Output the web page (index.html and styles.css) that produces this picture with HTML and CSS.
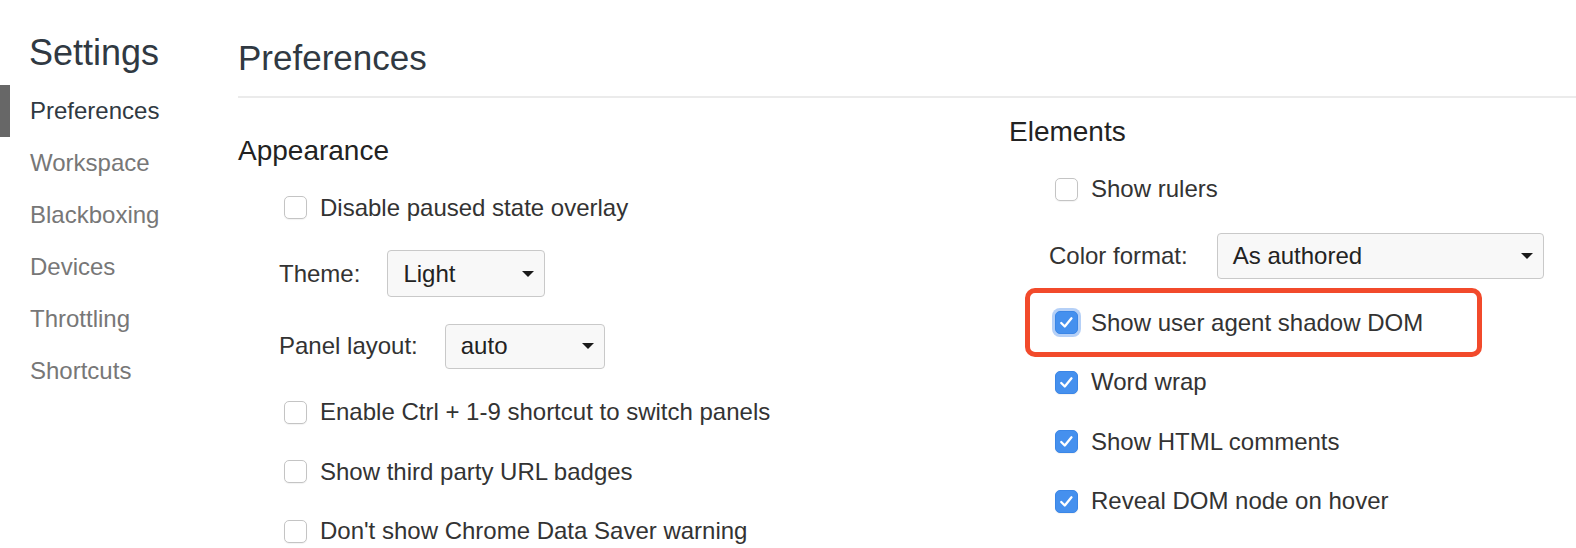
FILE: index.html
```html
<!DOCTYPE html>
<html>
<head>
<meta charset="utf-8">
<link rel="stylesheet" href="styles.css">
</head>
<body>
<div class="app">
  <aside class="sidebar">
    <div class="sidebar-title">Settings</div>
    <ul class="tabs">
      <li class="tab selected">Preferences</li>
      <li class="tab">Workspace</li>
      <li class="tab">Blackboxing</li>
      <li class="tab">Devices</li>
      <li class="tab">Throttling</li>
      <li class="tab">Shortcuts</li>
    </ul>
  </aside>
  <main class="content">
    <header class="content-header">Preferences</header>
    <div class="columns">
      <section class="col col-left">
        <h2 class="section-title">Appearance</h2>
        <div class="row row-check"><span class="box"></span><span class="label">Disable paused state overlay</span></div>
        <div class="row row-select"><span class="field-label">Theme:</span><span class="select sel-theme"><span>Light</span><span class="arrow"></span></span></div>
        <div class="row row-select"><span class="field-label">Panel layout:</span><span class="select sel-panel"><span>auto</span><span class="arrow"></span></span></div>
        <div class="row row-check"><span class="box"></span><span class="label">Enable Ctrl + 1-9 shortcut to switch panels</span></div>
        <div class="row row-check"><span class="box"></span><span class="label">Show third party URL badges</span></div>
        <div class="row row-check"><span class="box"></span><span class="label">Don't show Chrome Data Saver warning</span></div>
      </section>
      <section class="col col-right">
        <h2 class="section-title">Elements</h2>
        <div class="row row-check"><span class="box"></span><span class="label">Show rulers</span></div>
        <div class="row row-select tall"><span class="field-label">Color format:</span><span class="select sel-color"><span>As authored</span><span class="arrow"></span></span></div>
        <div class="row row-check highlighted"><span class="box checked focused"><svg viewBox="0 0 24 24" width="23" height="23"><path d="M6.5 12.5 L10.2 16.2 L17.2 7.6" fill="none" stroke="#fff" stroke-width="2.4" stroke-linecap="round" stroke-linejoin="round"/></svg></span><span class="label">Show user agent shadow DOM</span><span class="annotation"></span></div>
        <div class="row row-check"><span class="box checked"><svg viewBox="0 0 24 24" width="23" height="23"><path d="M6.5 12.5 L10.2 16.2 L17.2 7.6" fill="none" stroke="#fff" stroke-width="2.4" stroke-linecap="round" stroke-linejoin="round"/></svg></span><span class="label">Word wrap</span></div>
        <div class="row row-check"><span class="box checked"><svg viewBox="0 0 24 24" width="23" height="23"><path d="M6.5 12.5 L10.2 16.2 L17.2 7.6" fill="none" stroke="#fff" stroke-width="2.4" stroke-linecap="round" stroke-linejoin="round"/></svg></span><span class="label">Show HTML comments</span></div>
        <div class="row row-check"><span class="box checked"><svg viewBox="0 0 24 24" width="23" height="23"><path d="M6.5 12.5 L10.2 16.2 L17.2 7.6" fill="none" stroke="#fff" stroke-width="2.4" stroke-linecap="round" stroke-linejoin="round"/></svg></span><span class="label">Reveal DOM node on hover</span></div>
      </section>
    </div>
  </main>
</div>
</body>
</html>
```

FILE: styles.css
```css
* { box-sizing: border-box; }
html, body {
  margin: 0;
  padding: 0;
  background: #fff;
  width: 1576px;
  height: 548px;
  overflow: hidden;
}
body {
  font-family: "Liberation Sans", Arial, sans-serif;
  color: #333;
}
.app {
  display: flex;
  height: 548px;
}
.sidebar {
  width: 238px;
  flex: none;
}
.sidebar-title {
  font-size: 36px;
  line-height: 36px;
  color: #303942;
  padding-left: 29px;
  margin-top: 35px;
  margin-bottom: 14px;
}
.tabs {
  list-style: none;
  margin: 0;
  padding: 0;
}
.tab {
  height: 52px;
  display: flex;
  align-items: center;
  padding-left: 30px;
  font-size: 24px;
  color: #777;
  border-left: 10px solid transparent;
  margin-left: 0;
  padding-left: 20px;
}
.tab.selected {
  border-left-color: #676767;
  color: #303942;
}
.content {
  flex: 1;
  min-width: 0;
}
.content-header {
  font-size: 35px;
  line-height: 35px;
  color: #303942;
  padding-top: 40px;
  padding-bottom: 21px;
  border-bottom: 2px solid #ebebeb;
}
.columns {
  display: flex;
}
.col {
  display: flex;
  flex-direction: column;
}
.col-left {
  width: 771px;
  padding-top: 38px;
}
.col-right {
  flex: 1;
  padding-top: 19px;
}
.section-title {
  margin: 0 0 12px 0;
  font-size: 28px;
  line-height: 30px;
  font-weight: normal;
  color: #222;
}
.col-right .section-title {
  margin-bottom: 12.25px;
}
.row {
  display: flex;
  align-items: center;
  font-size: 24px;
  color: #333;
}
.row-check {
  height: 59.5px;
  padding-left: 46px;
}
.row-select {
  height: 72.5px;
  padding-left: 41px;
}
.row-select.tall {
  height: 74px;
  padding-left: 40px;
}
.box {
  width: 23px;
  height: 23px;
  flex: none;
  border: 1px solid #c4c4c4;
  border-radius: 5px;
  background: #fff;
  box-shadow: 0 1px 1px rgba(0, 0, 0, 0.05);
  margin-right: 13px;
  display: flex;
  align-items: center;
  justify-content: center;
}
.box.checked {
  background: #4590ee;
  border-color: #3b86e6;
}
.box.checked svg {
  display: block;
  margin: -1px;
}
.box.focused {
  box-shadow: 0 0 0 3px rgba(120, 170, 240, 0.55);
}
.field-label {
  margin-right: 27px;
}
.select {
  display: flex;
  align-items: center;
  justify-content: space-between;
  height: 46px;
  padding: 0 10px 0 15px;
  background: #f8f8f8;
  border: 1px solid #c9c9c9;
  border-radius: 4px;
  color: #222;
}
.sel-theme { width: 158px; height: 47px; }
.sel-panel { width: 160px; height: 45px; }
.sel-color { width: 327px; margin-left: 2px; }
.arrow {
  width: 0;
  height: 0;
  border-left: 6px solid transparent;
  border-right: 6px solid transparent;
  border-top: 6px solid #1a1a1a;
  margin-right: 0;
}
.highlighted {
  position: relative;
}
.annotation {
  position: absolute;
  left: 16px;
  top: -5px;
  width: 457px;
  height: 69px;
  border: 5px solid #f24a2b;
  border-radius: 10px;
  pointer-events: none;
}
```
